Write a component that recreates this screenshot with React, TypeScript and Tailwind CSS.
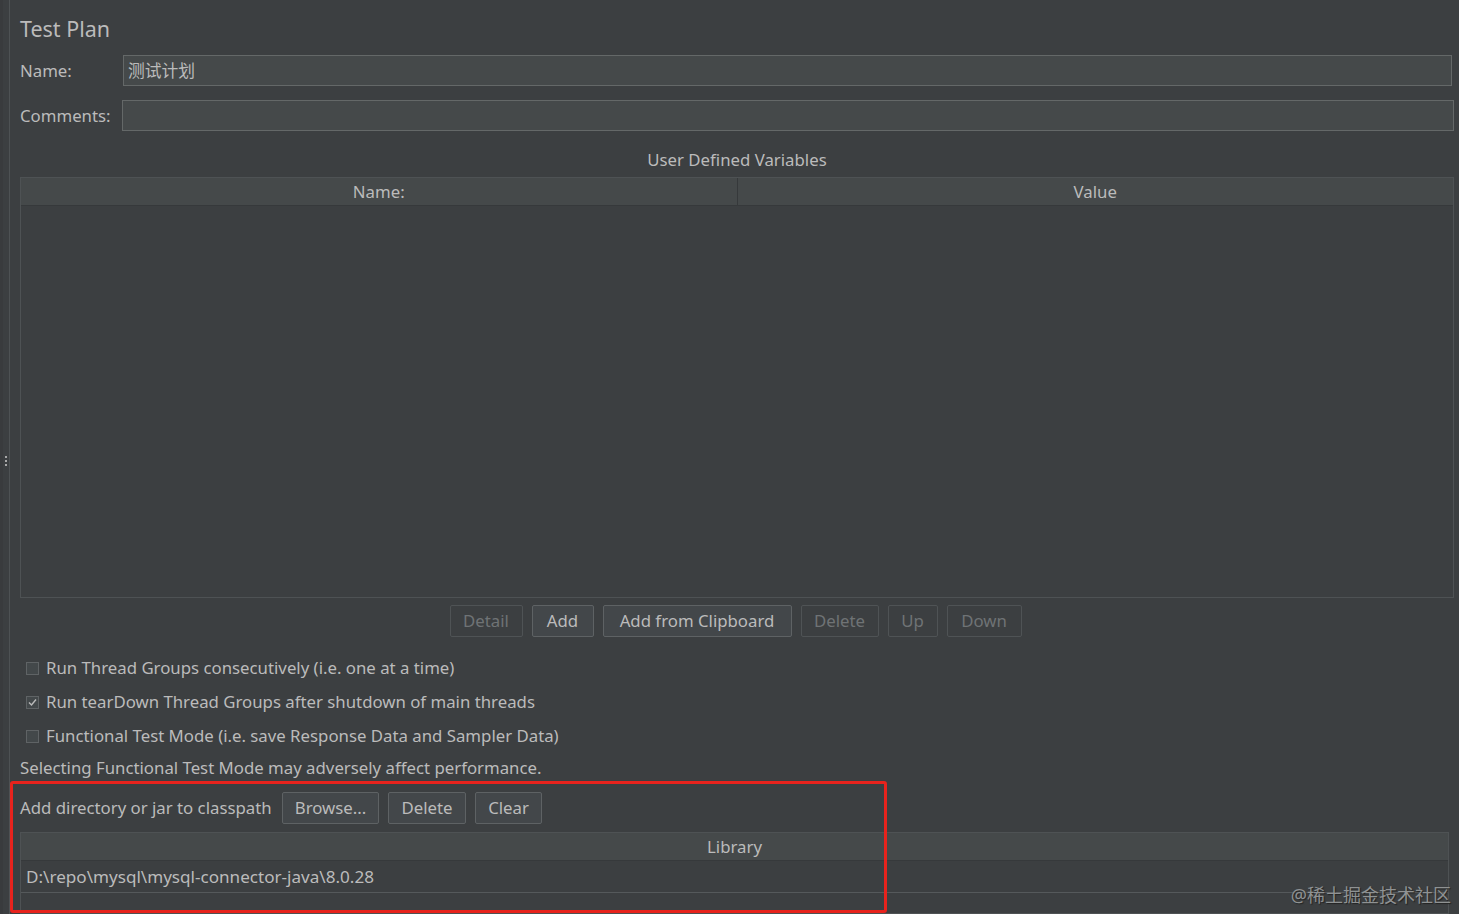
import React from "react";

const font = { fontFamily: '"Noto Sans", "Noto Sans CJK SC", sans-serif' };

function Btn({ label, disabled, w }: { label: string; disabled?: boolean; w: string }) {
  return (
    <div
      className={`h-[32px] ${w} shrink-0 flex items-center justify-center rounded-[2px] border text-[16.8px] ${
        disabled
          ? "border-[#4f5355] bg-[#3c3f41] text-[#6f7375]"
          : "border-[#5e6264] bg-[#43474a] text-[#bbbbbb]"
      }`}
    >
      {label}
    </div>
  );
}

function Check({ checked, label }: { checked?: boolean; label: string }) {
  return (
    <div className="h-[34px] flex items-center pl-[6px] gap-[7px]">
      <div className="w-[13px] h-[13px] border border-[#5f6365] bg-[#43484a] flex items-center justify-center">
        {checked && (
          <svg width="11" height="11" viewBox="0 0 11 11">
            <path d="M2 5.5 L4.5 8 L9 2.5" stroke="#bbbbbb" strokeWidth="1.4" fill="none" />
          </svg>
        )}
      </div>
      <span>{label}</span>
    </div>
  );
}

export default function App() {
  return (
    <div
      className="w-[1459px] h-[914px] overflow-hidden bg-[#3c3f41] text-[#bbbbbb] text-[16.8px] flex relative"
      style={font}
    >
      {/* left splitter strip */}
      <div className="w-[10px] shrink-0 flex">
        <div className="w-[3px] bg-[#393b3d]" />
        <div className="flex-1 flex flex-col items-center justify-center bg-[#3c3f41]">
          <div className="flex flex-col gap-[2px] mt-[8px]">
            <div className="w-[2px] h-[2px] bg-[#a9a9a9]" />
            <div className="w-[2px] h-[2px] bg-[#a9a9a9]" />
            <div className="w-[2px] h-[2px] bg-[#a9a9a9]" />
          </div>
        </div>
        <div className="w-[1px] bg-[#4e5254]" />
      </div>

      <div className="flex-1 flex flex-col pl-[10px] pr-[5px]">
        <div className="h-[55px] flex items-center text-[21.5px] pt-[3px]">Test Plan</div>

        <div className="h-[31px] flex items-center">
          <div className="w-[103px] shrink-0">Name:</div>
          <div className="flex-1 mr-[2px] h-full border border-[#646868] bg-[#45494a] flex items-center px-[4px] text-[16.8px]">
            测试计划
          </div>
        </div>

        <div className="h-[31px] mt-[14px] flex items-center">
          <div className="w-[102px] shrink-0">Comments:</div>
          <div className="flex-1 h-full border border-[#646868] bg-[#45494a]" />
        </div>

        <div className="h-[46px] flex items-center justify-center pt-[12px]">User Defined Variables</div>

        {/* table */}
        <div className="h-[421px] border border-[#4e5254] flex flex-col">
          <div className="h-[28px] flex bg-[#45494a] border-b border-[#36393b]">
            <div className="flex-1 flex items-center justify-center border-r border-[#36393b]">Name:</div>
            <div className="flex-1 flex items-center justify-center">Value</div>
          </div>
          <div className="flex-1 bg-[#3c3f41]" />
        </div>

        <div className="mt-[7px] flex justify-center gap-[9px] pr-[3px]">
          <Btn label="Detail" disabled w="w-[73px]" />
          <Btn label="Add" w="w-[62px]" />
          <Btn label="Add from Clipboard" w="w-[189px]" />
          <Btn label="Delete" disabled w="w-[78px]" />
          <Btn label="Up" disabled w="w-[50px]" />
          <Btn label="Down" disabled w="w-[75px]" />
        </div>

        <div className="mt-[14px] flex flex-col">
          <Check label="Run Thread Groups consecutively (i.e. one at a time)" />
          <Check checked label="Run tearDown Thread Groups after shutdown of main threads" />
          <Check label="Functional Test Mode (i.e. save Response Data and Sampler Data)" />
        </div>

        <div className="h-[30px] flex items-center">Selecting Functional Test Mode may adversely affect performance.</div>

        <div className="mt-[9px] h-[32px] flex items-center gap-[9px]">
          <span className="w-[253px] shrink-0 whitespace-nowrap">Add directory or jar to classpath</span>
          <Btn label="Browse..." w="w-[97px]" />
          <Btn label="Delete" w="w-[78px]" />
          <Btn label="Clear" w="w-[67px]" />
        </div>

        <div className="mt-[8px] mr-[5px] flex-1 border border-[#4e5254] flex flex-col">
          <div className="h-[28px] bg-[#45494a] border-b border-[#36393b] flex items-center justify-center">Library</div>
          <div className="h-[32px] border-b border-[#55595b] flex items-center pl-[5px] text-[17.1px]">
            D:\repo\mysql\mysql-connector-java\8.0.28
          </div>
          <div className="flex-1" />
        </div>
      </div>

      {/* red annotation rectangle */}
      <div className="absolute left-[10px] top-[781px] w-[877px] h-[132px] border-[3px] border-[#e8231d] rounded-[3px] pointer-events-none" />

      {/* watermark */}
      <div
        className="absolute right-[8px] bottom-[5px] text-[18px] text-[#8f9293]"
        style={{ textShadow: "1px 1px 1px #222" }}
      >
        @稀土掘金技术社区
      </div>
    </div>
  );
}
